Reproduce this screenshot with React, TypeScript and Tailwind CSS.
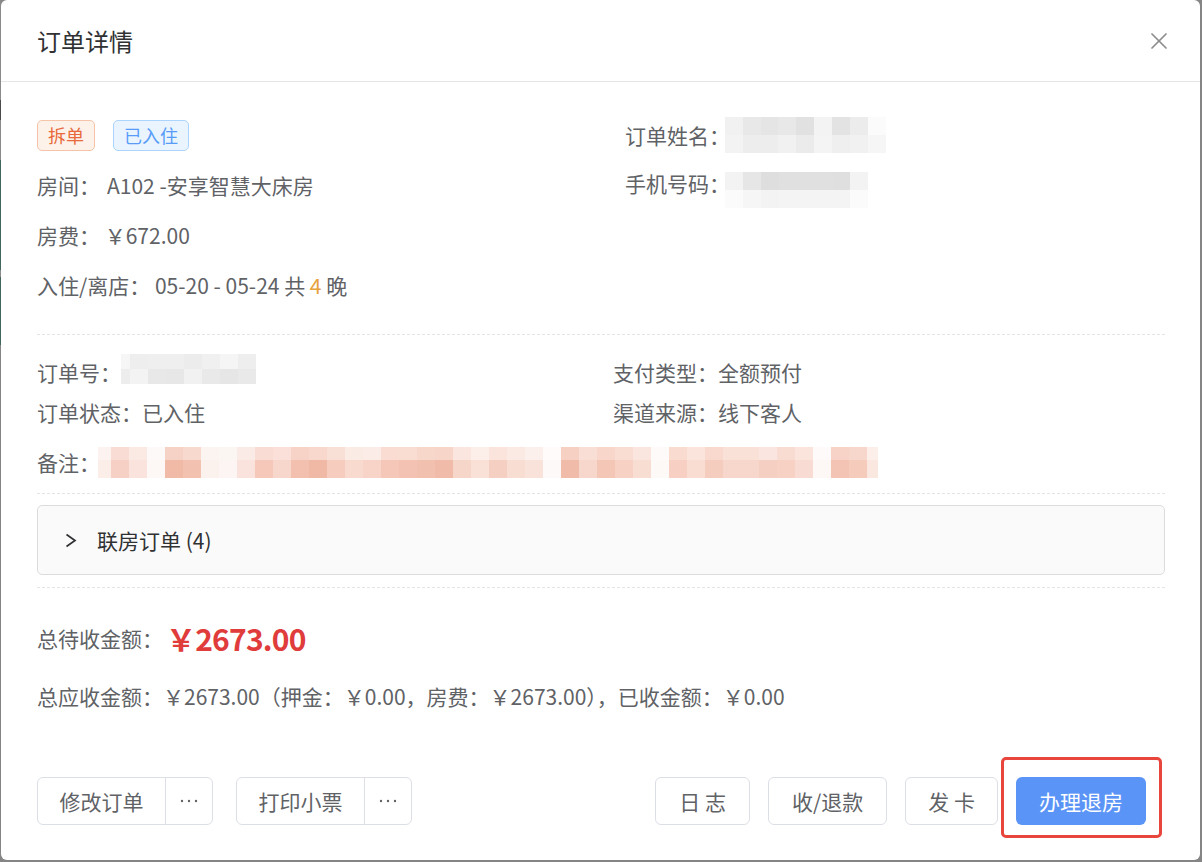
import React from "react";

type Cell = { w: number; top: string; bottom: string };

// Pixelated masking block for hidden personal data
function Mosaic({ cells, topH, bottomH, className = "" }: { cells: Cell[]; topH: number; bottomH: number; className?: string }) {
  return (
    <div className={"flex shrink-0 " + className}>
      {cells.map((c, i) => (
        <div key={i} className="flex flex-col" style={{ width: c.w }}>
          <div style={{ height: topH, backgroundColor: c.top }} />
          <div style={{ height: bottomH, backgroundColor: c.bottom }} />
        </div>
      ))}
    </div>
  );
}

const build = (w: number[], top: string[], bottom: string[]): Cell[] =>
  w.map((x, i) => ({ w: x, top: top[i], bottom: bottom[i] }));

const nameCells = build(
  [18, 18, 17, 18, 18, 18, 18, 18, 18],
  ["#f1f1f1", "#e8e8e8", "#e5e5e5", "#e8e8e8", "#e1e1e1", "#f3f3f3", "#e3e3e3", "#ececec", "#fbfbfb"],
  ["#f3f3f3", "#ededed", "#ededed", "#f1f1f1", "#ebebeb", "#f4f4f4", "#efefef", "#f1f1f1", "#f6f6f6"]
);

const phoneCells = build(
  [18, 18, 18, 18, 18, 18, 17, 18],
  ["#f3f3f3", "#e6e6e6", "#dedede", "#e0e0e0", "#e0e0e0", "#e0e0e0", "#dfdfdf", "#f3f3f3"],
  ["#fbfbfb", "#f6f6f6", "#f3f3f3", "#f4f4f4", "#f4f4f4", "#f4f4f4", "#f4f4f4", "#fbfbfb"]
);

const orderCells = build(
  [9, 18, 18, 18, 18, 18, 18, 18],
  ["#f6f6f6", "#eeeeee", "#efefef", "#efefef", "#ececec", "#f0f0f0", "#f5f5f5", "#eeeeee"],
  ["#ededed", "#f3f3f3", "#e8e8e8", "#e7e7e7", "#f1f1f1", "#e9e9e9", "#e6e6e6", "#e9e9e9"]
);

const remarkPairs: [string, string][] = [
  ["#fcf3f0", "#fbeee9"],
  ["#f9ddd4", "#f6d0c4"],
  ["#fbe9e3", "#f9e3dc"],
  ["#fdf9f8", "#fdf8f6"],
  ["#f6d1c5", "#f0baa6"],
  ["#f8d9ce", "#f2c1b0"],
  ["#fcf4f1", "#fbf1ed"],
  ["#fcf6f3", "#fdf5f3"],
  ["#fbebe6", "#fae3dd"],
  ["#f9ddd4", "#f5c8b9"],
  ["#fae0d8", "#f7d7cc"],
  ["#f7d3c7", "#f3bfae"],
  ["#f8d8cd", "#f0b9a5"],
  ["#f9e0d7", "#f6ccbe"],
  ["#fbebe5", "#f8dacf"],
  ["#fcece7", "#f7d4c7"],
  ["#fadcd2", "#f5c7b8"],
  ["#f9ddd3", "#f3c2b2"],
  ["#f8d7cb", "#f2c0af"],
  ["#f8d5c9", "#f0bca9"],
  ["#fbe6df", "#f7d6ca"],
  ["#fcefe9", "#fae1d8"],
  ["#fae4dc", "#f5cfc1"],
  ["#fbeae3", "#f8ddd3"],
  ["#fcf0ec", "#f9e2da"],
  ["#fefbfa", "#fdf9f8"],
  ["#f6d0c3", "#f0bca9"],
  ["#f9ded5", "#f7d6cb"],
  ["#f8d6ca", "#f3c6b5"],
  ["#f9dcd2", "#f6d1c4"],
  ["#fbe6df", "#f8ddd3"],
  ["#fdfaf9", "#fdf9f7"],
  ["#f9dbd0", "#f7d0c3"],
  ["#fae4dc", "#f9dcd2"],
  ["#f9d9cd", "#f5cdbf"],
  ["#fae1d8", "#f7d6cb"],
  ["#fae1d8", "#f7d7cc"],
  ["#fbe5e0", "#f4cfc2"],
  ["#f9dcd1", "#f6d1c4"],
  ["#fae4dc", "#f8dcd3"],
  ["#fefaf9", "#fdf7f5"],
  ["#f6d3c6", "#f3c4b3"],
  ["#f7d7cb", "#f5cbbc"],
  ["#fcefea", "#fae7e0"],
];

const remarkCells: Cell[] = remarkPairs.map(([top, bottom], i) => ({
  w: i === 0 ? 13 : i === remarkPairs.length - 1 ? 11 : 18,
  top,
  bottom,
}));

function Dots() {
  return (
    <svg width="18" height="4" viewBox="0 0 18 4" fill="#606266">
      <circle cx="2" cy="2" r="1.2" />
      <circle cx="9" cy="2" r="1.2" />
      <circle cx="16" cy="2" r="1.2" />
    </svg>
  );
}

function SplitButton({ label }: { label: string }) {
  return (
    <div className="flex h-[48px] rounded-[6px] border border-[#dcdfe6] bg-white text-[#606266]">
      <div className="flex w-[128px] items-center justify-center border-r border-[#dcdfe6]">{label}</div>
      <div className="flex w-[46px] items-center justify-center">
        <Dots />
      </div>
    </div>
  );
}

function PlainButton({ label, px = "px-[22px]" }: { label: string; px?: string }) {
  return (
    <div className={"flex h-[48px] items-center rounded-[6px] border border-[#dcdfe6] bg-white text-[#606266] whitespace-pre " + px}>
      {label}
    </div>
  );
}

export default function App() {
  return (
    <div className="flex h-[862px] w-[1202px] bg-[#858585] font-['Noto_Sans_CJK_SC',sans-serif] text-[21px] leading-[30px] text-[#606266]">
      {/* strip of the page behind the overlay */}
      <div className="flex w-[1px] flex-col">
        <div className="h-[100px] bg-[#8a8a8a]" />
        <div className="h-[20px] bg-[#4a4a4a]" />
        <div className="h-[40px] bg-[#8a8a8a]" />
        <div className="h-[110px] bg-[#42665c]" />
        <div className="h-[7px] bg-[#8a8a8a]" />
        <div className="h-[68px] bg-[#42665c]" />
        <div className="flex-1 bg-[#858585]" />
      </div>

      <div className="flex h-[860px] w-[1199px] flex-col overflow-hidden rounded-[6px] bg-white">
        {/* header */}
        <div className="flex h-[82px] shrink-0 items-center justify-between border-b border-[#e6e6e6] pr-[33px] pl-[36px]">
          <div className="text-[24px] text-[#303133]">订单详情</div>
          <svg width="16" height="16" viewBox="0 0 16 16" stroke="#8e8e8e" strokeWidth="1.7" strokeLinecap="round">
            <line x1="1" y1="1" x2="15" y2="15" />
            <line x1="15" y1="1" x2="1" y2="15" />
          </svg>
        </div>

        <div className="flex flex-1 flex-col pr-[35px] pl-[36px]">
          {/* guest section */}
          <div className="mt-[28px] grid grid-cols-[588px_1fr]">
            <div className="flex flex-col">
              <div className="flex h-[50px] items-center gap-[18px]">
                <span className="rounded-[5px] border border-[#f5c3a7] bg-[#fdf2ea] px-[10px] text-[18px] leading-[29px] text-[#e8693b]">
                  拆单
                </span>
                <span className="rounded-[5px] border border-[#acd4fd] bg-[#e9f4ff] px-[10px] text-[18px] leading-[29px] text-[#589cf7]">
                  已入住
                </span>
              </div>
              <div className="flex h-[50px] items-center whitespace-pre">
                房间：<span className="ml-[7px]">A102 -安享智慧大床房</span>
              </div>
              <div className="flex h-[50px] items-center whitespace-pre">房费： ￥672.00</div>
              <div className="flex h-[50px] items-center whitespace-pre">
                入住/离店： 05-20 - 05-24 共 <span className="text-[#e6a23c]">4</span> 晚
              </div>
            </div>
            <div className="flex flex-col">
              <div className="flex h-[50px] items-center">
                <span>订单姓名：</span>
                <Mosaic cells={nameCells} topH={18} bottomH={18} className="ml-[-5px]" />
              </div>
              <div className="flex h-[46px] items-center">
                <span>手机号码：</span>
                <Mosaic cells={phoneCells} topH={18} bottomH={18} className="mt-[13px] ml-[-5px]" />
              </div>
            </div>
          </div>

          <div className="mt-[24px] border-t border-dashed border-[#e4e4e4]" />

          {/* order section */}
          <div className="mt-[17px] grid grid-cols-[576px_1fr]">
            <div className="flex flex-col">
              <div className="flex h-[40px] items-center">
                <span>订单号：</span>
                <Mosaic cells={orderCells} topH={15} bottomH={15} className="mb-[6px]" />
              </div>
              <div className="flex h-[40px] items-center">订单状态：已入住</div>
            </div>
            <div className="flex flex-col">
              <div className="flex h-[40px] items-center">支付类型：全额预付</div>
              <div className="flex h-[40px] items-center">渠道来源：线下客人</div>
            </div>
          </div>
          <div className="mt-[10px] flex h-[40px] items-center">
            <span>备注：</span>
            <Mosaic cells={remarkCells} topH={13} bottomH={18} className="ml-[-2px]" />
          </div>

          <div className="mt-[11px] border-t border-dashed border-[#e4e4e4]" />

          {/* linked rooms */}
          <div className="mt-[11px] flex h-[70px] items-center rounded-[5px] border border-[#dcdcdc] bg-[#fafafa] pl-[27px] text-[#303133]">
            <svg width="12" height="15" viewBox="0 0 12 15" fill="none" stroke="#303133" strokeWidth="1.7" strokeLinejoin="miter">
              <polyline points="1.5,1.5 10,7.5 1.5,13.5" />
            </svg>
            <span className="ml-[20px]">联房订单 (4)</span>
          </div>

          <div className="mt-[12px] border-t border-dashed border-[#e4e4e4]" />

          {/* totals */}
          <div className="mt-[30px] flex h-[40px] items-center">
            <span>总待收金额：</span>
            <span className="ml-[3px] text-[30px] font-bold tracking-[-0.8px] text-[#e03c3c]">￥2673.00</span>
          </div>
          <div className="mt-[18px] flex h-[40px] items-center">
            总应收金额：￥2673.00（押金：￥0.00，房费：￥2673.00），已收金额：￥0.00
          </div>

          {/* footer actions */}
          <div className="mt-[61px] flex items-center justify-between pr-[19px]">
            <div className="flex gap-[23px]">
              <SplitButton label="修改订单" />
              <SplitButton label="打印小票" />
            </div>
            <div className="flex items-center gap-[18px]">
              <PlainButton label="日 志" px="px-[23px]" />
              <PlainButton label="收/退款" px="px-[23px]" />
              <PlainButton label="发 卡" />
              <div className="relative">
                <div className="flex h-[48px] w-[130px] items-center justify-center rounded-[6px] bg-[#5a94f6] text-white">
                  办理退房
                </div>
                <div className="pointer-events-none absolute -top-[20px] -right-[16px] -bottom-[13px] -left-[15px] rounded-[5px] border-[3px] border-[#e8453c]" />
              </div>
            </div>
          </div>
        </div>
      </div>
    </div>
  );
}
